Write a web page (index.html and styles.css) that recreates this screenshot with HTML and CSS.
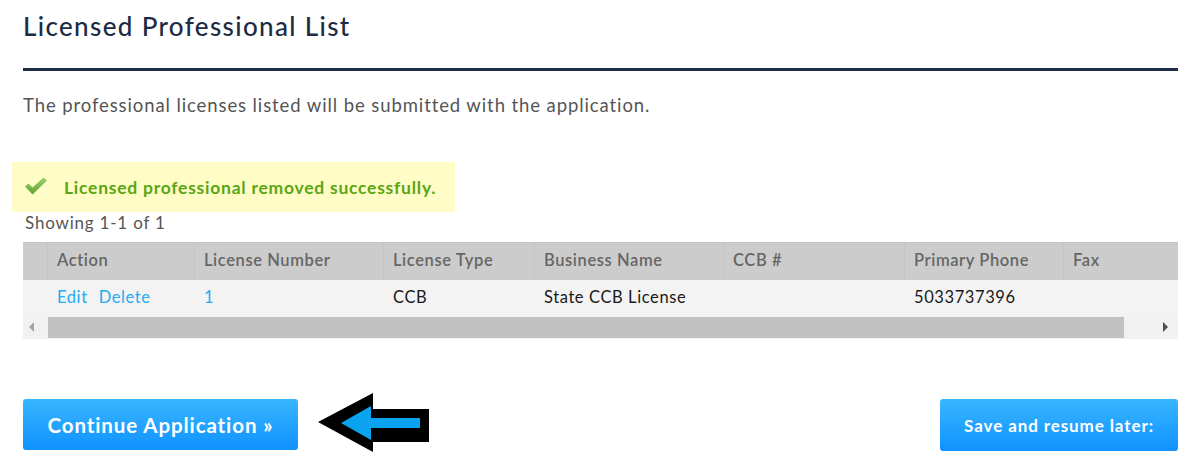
FILE: index.html
```html
<!DOCTYPE html>
<html>
<head>
<meta charset="utf-8">
<link rel="stylesheet" href="styles.css">
</head>
<body>
<div class="page">
  <h1 class="title">Licensed Professional List</h1>
  <div class="rule"></div>
  <p class="intro">The professional licenses listed will be submitted with the application.</p>
  <div class="notice">
    <svg class="check" width="24" height="20" viewBox="0 0 24 20">
      <defs>
        <linearGradient id="cg" x1="0" y1="0" x2="0" y2="1">
          <stop offset="0" stop-color="#9ad06a"/>
          <stop offset="1" stop-color="#5fa632"/>
        </linearGradient>
      </defs>
      <path d="M1 10.5 L4.5 7.5 L8.5 11.5 L19.5 1.5 L23 4.5 L8.5 18.5 Z" fill="url(#cg)"/>
    </svg>
    <span class="notice-text">Licensed professional removed successfully.</span>
  </div>
  <div class="count">Showing 1-1 of 1</div>
  <div class="grid">
    <div class="row head">
      <div class="cell c0"></div>
      <div class="cell c1">Action</div>
      <div class="cell c2">License Number</div>
      <div class="cell c3">License Type</div>
      <div class="cell c4">Business Name</div>
      <div class="cell c5">CCB #</div>
      <div class="cell c6">Primary Phone</div>
      <div class="cell c7">Fax</div>
    </div>
    <div class="row data">
      <div class="cell c0"></div>
      <div class="cell c1"><a class="link">Edit</a><a class="link">Delete</a></div>
      <div class="cell c2"><a class="link">1</a></div>
      <div class="cell c3">CCB</div>
      <div class="cell c4">State CCB License</div>
      <div class="cell c5"></div>
      <div class="cell c6">5033737396</div>
      <div class="cell c7"></div>
    </div>
    <div class="scrollbar">
      <div class="sb-btn"><span class="tri-left"></span></div>
      <div class="sb-thumb"></div>
      <div class="sb-btn right"><span class="tri-right"></span></div>
    </div>
  </div>
  <div class="actions">
    <div class="left-group">
      <button class="btn btn-main">Continue Application »</button>
      <svg class="arrow" width="114" height="62" viewBox="317 391 114 62">
        <polygon points="318,421 373,392 373,408 429,408 429,441 373,441 373,451" fill="#000"/>
        <polygon points="341,422 371,405 371,417 420,417 420,427 371,427 371,439" fill="#0aa3ef"/>
      </svg>
    </div>
    <button class="btn btn-save">Save and resume later:</button>
  </div>
</div>
</body>
</html>
```

FILE: styles.css
```css
html, body {
  margin: 0;
  padding: 0;
  background: #ffffff;
}

.page {
  width: 1155px;
  padding: 0 17px 0 23px;
  font-family: "Lato", "Open Sans", sans-serif;
  color: #555555;
}

.title {
  margin: 11px 0 0 0;
  font-size: 26px;
  line-height: 30px;
  font-weight: 500;
  color: #1d2b44;
  letter-spacing: 1.35px;
}

.rule {
  margin-top: 27px;
  height: 3px;
  background: #1d2b44;
}

.intro {
  margin: 22px 0 0 0;
  font-size: 18.5px;
  line-height: 24px;
  color: #555555;
  letter-spacing: 0.9px;
}

.notice {
  margin: 45px 0 0 -11px;
  width: 443px;
  height: 50px;
  background: #fffcc6;
  display: flex;
  align-items: center;
  box-sizing: border-box;
  padding-left: 12px;
}

.check {
  margin-top: -3px;
}

.notice-text {
  margin-left: 16px;
  font-size: 17.5px;
  font-weight: 700;
  color: #5aa614;
  letter-spacing: 0.75px;
}

.count {
  padding-left: 2px;
  height: 30px;
  line-height: 22px;
  font-size: 17px;
  color: #555555;
  letter-spacing: 0.8px;
}

.grid {
  width: 1155px;
}

.row {
  display: flex;
}

.row.head {
  height: 38px;
  background: #cccccc;
  border-top: 1px solid #c4c4c4;
  box-sizing: border-box;
}

.row.data {
  height: 34px;
  background: #f3f3f3;
}

.cell {
  box-sizing: border-box;
  display: flex;
  align-items: center;
  padding-left: 9px;
  font-size: 16.5px;
  letter-spacing: 0.6px;
}

.head .cell {
  color: #666666;
  font-weight: 600;
  border-right: 1px solid #c4c4c4;
  padding-bottom: 4px;
}

.head .cell.c7 {
  border-right: none;
}

.data .cell {
  color: #1a1a1a;
}

.c0 { width: 25px; padding-left: 0; }
.c1 { width: 147px; }
.c2 { width: 189px; }
.c3 { width: 151px; }
.c4 { width: 189px; }
.c5 { width: 181px; }
.c6 { width: 159px; }
.c7 { width: 114px; }

.link {
  color: #24abf2;
  margin-right: 11px;
  cursor: pointer;
}

.scrollbar {
  display: flex;
  height: 25px;
  background: #f1f1f1;
}

.sb-btn {
  width: 25px;
  display: flex;
  align-items: center;
  justify-content: center;
}

.sb-btn.right {
  width: 54px;
  justify-content: flex-end;
  padding-right: 10px;
  box-sizing: border-box;
}

.tri-left {
  width: 0;
  height: 0;
  border-top: 5px solid transparent;
  border-bottom: 5px solid transparent;
  border-right: 5px solid #a3a3a3;
  margin-left: -8px;
}

.tri-right {
  width: 0;
  height: 0;
  border-top: 5px solid transparent;
  border-bottom: 5px solid transparent;
  border-left: 5px solid #505050;
}

.sb-thumb {
  width: 1076px;
  height: 21px;
  margin-top: 3px;
  background: #c1c1c1;
}

.actions {
  margin-top: 60px;
  display: flex;
  justify-content: space-between;
  align-items: flex-start;
}

.left-group {
  display: flex;
  align-items: flex-start;
}

.btn {
  border: none;
  border-radius: 3px;
  background: linear-gradient(#38b6ff, #1092ff);
  color: #ffffff;
  font-family: "Lato", "Open Sans", sans-serif;
  font-weight: 700;
  cursor: pointer;
}

.btn-main {
  width: 275px;
  height: 51px;
  font-size: 20.5px;
  letter-spacing: 0.9px;
}

.btn-save {
  width: 238px;
  height: 52px;
  font-size: 17px;
  letter-spacing: 0.9px;
}

.arrow {
  margin-left: 19px;
  margin-top: -7px;
}
```
